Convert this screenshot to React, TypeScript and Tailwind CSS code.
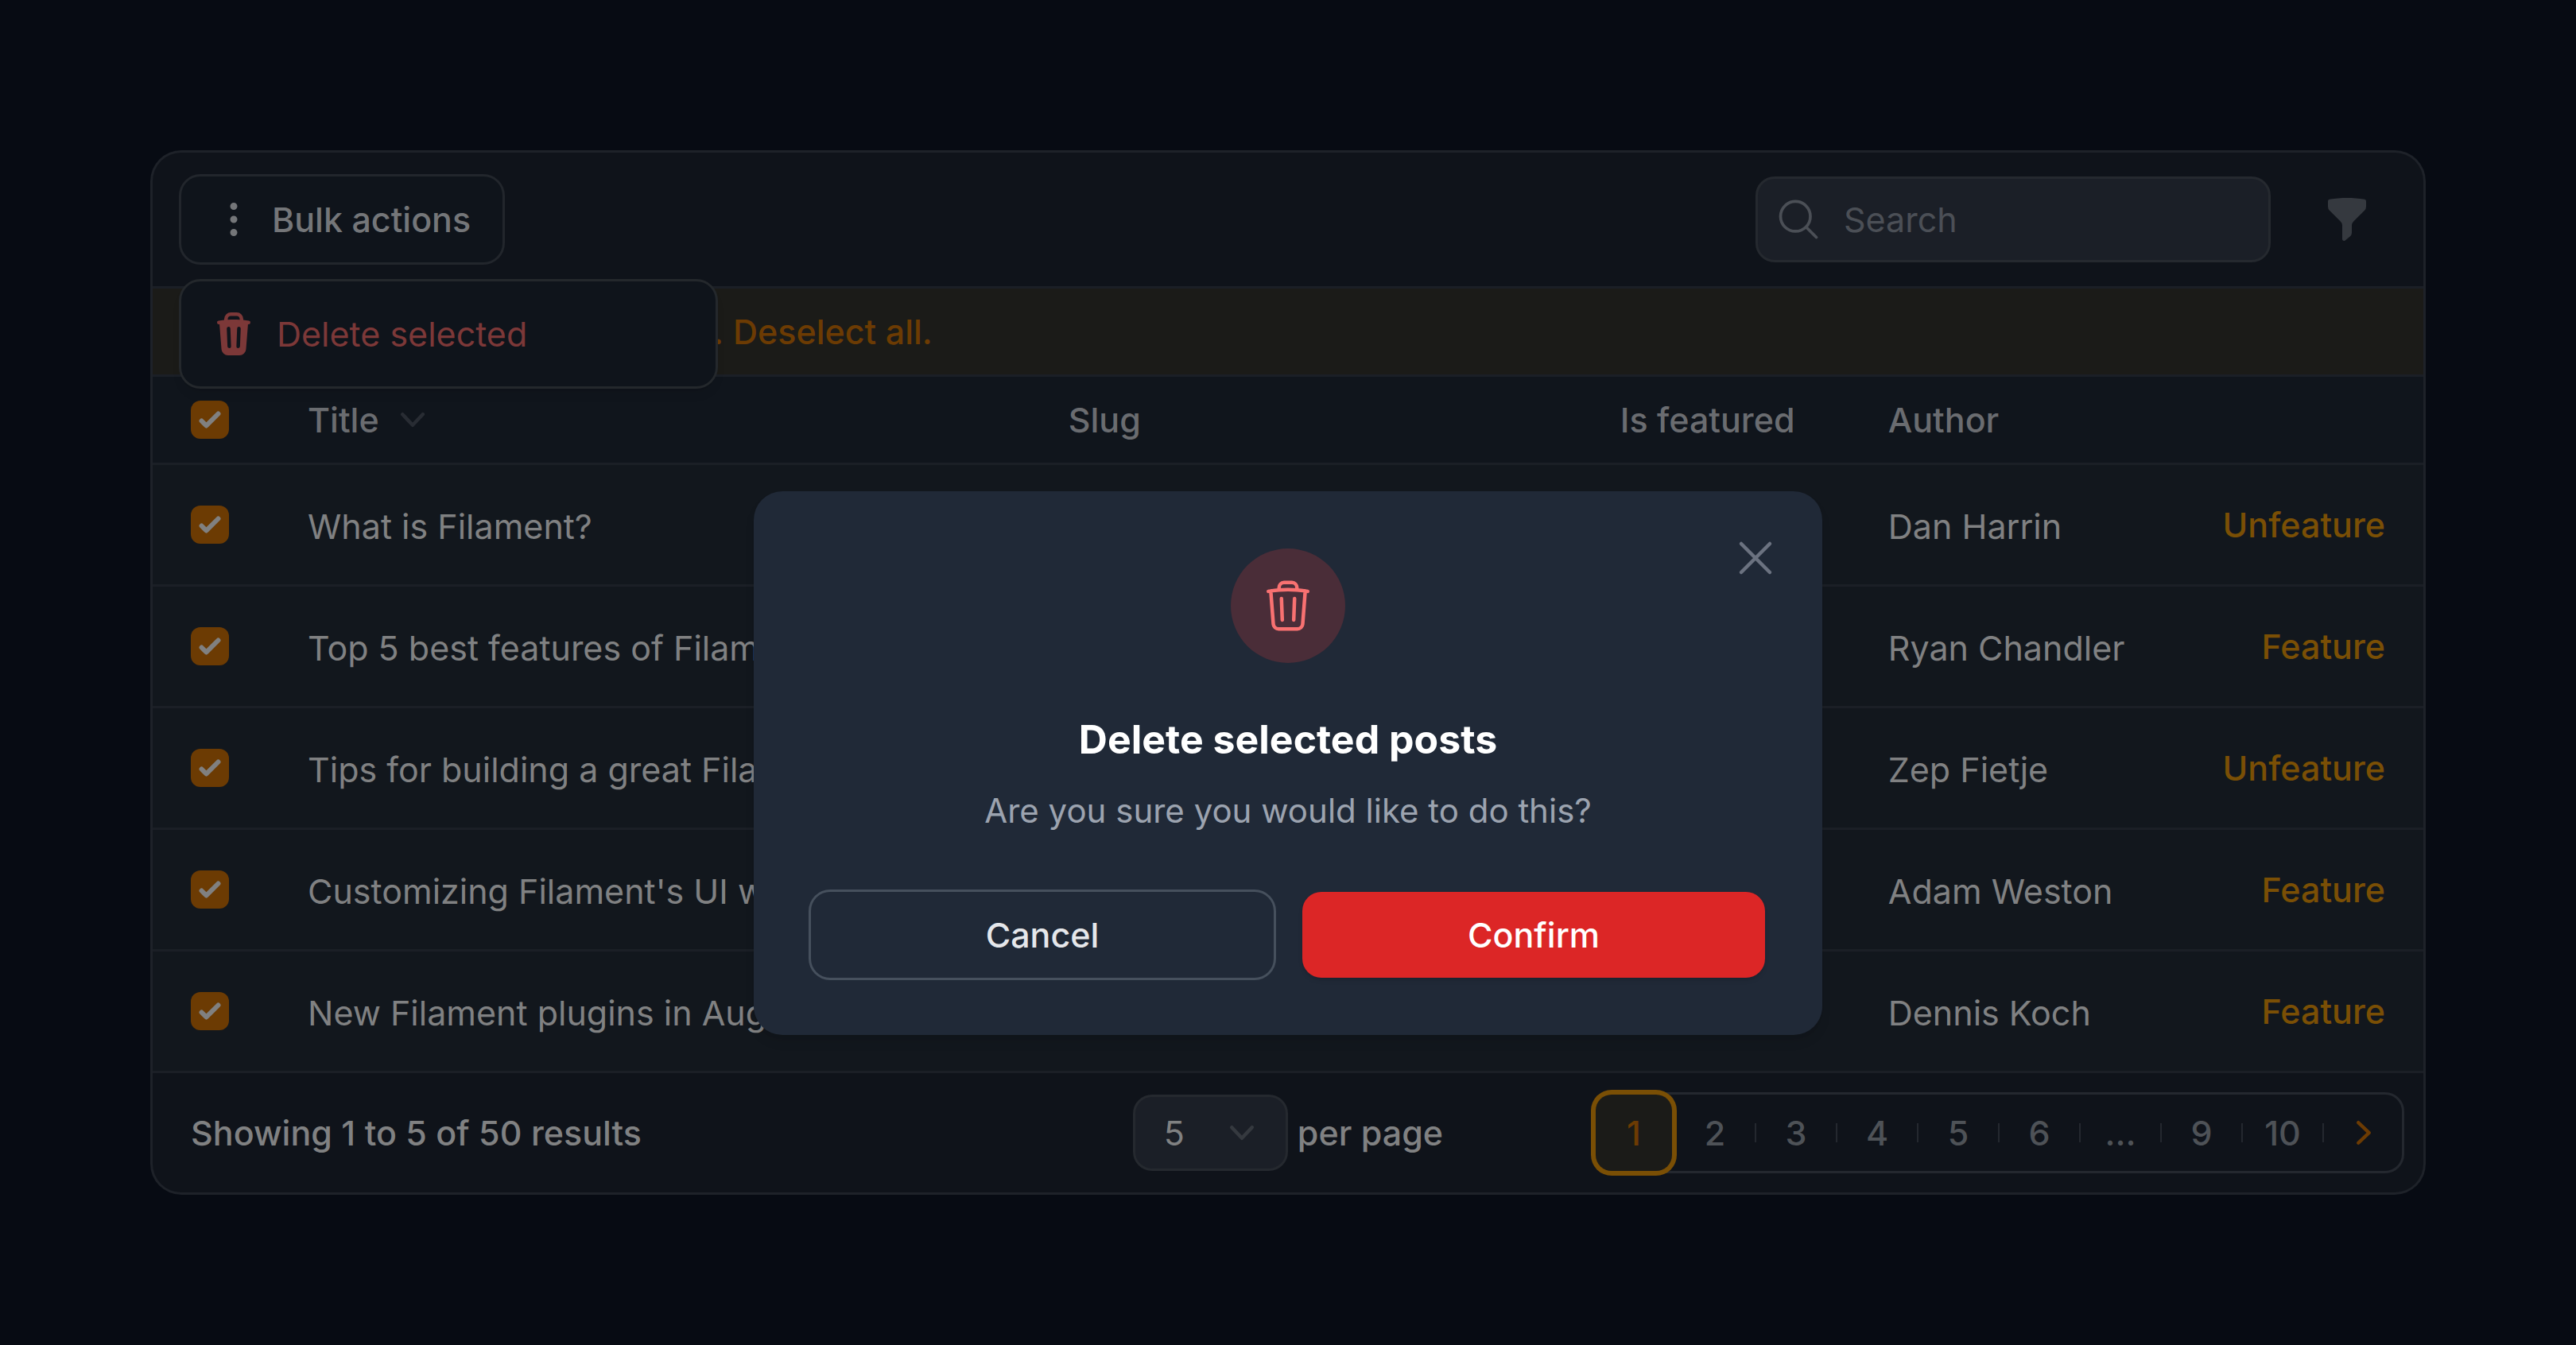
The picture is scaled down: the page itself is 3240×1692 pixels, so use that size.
import React from "react";

const posts = [
  { title: "What is Filament?", author: "Dan Harrin", action: "Unfeature" },
  { title: "Top 5 best features of Filament", author: "Ryan Chandler", action: "Feature" },
  { title: "Tips for building a great Filament plugin", author: "Zep Fietje", action: "Unfeature" },
  { title: "Customizing Filament's UI with themes", author: "Adam Weston", action: "Feature" },
  { title: "New Filament plugins in August", author: "Dennis Koch", action: "Feature" },
];

const pages = ["2", "3", "4", "5", "6", "...", "9", "10"];

function MiniIcon({ path, className }: { path: string; className: string }) {
  return (
    <svg viewBox="0 0 20 20" fill="currentColor" aria-hidden="true" className={className}>
      <path fillRule="evenodd" clipRule="evenodd" d={path} />
    </svg>
  );
}

function OutlineIcon({ path, className }: { path: string; className: string }) {
  return (
    <svg
      viewBox="0 0 24 24"
      fill="none"
      stroke="currentColor"
      strokeWidth="1.5"
      strokeLinecap="round"
      strokeLinejoin="round"
      aria-hidden="true"
      className={className}
    >
      <path d={path} />
    </svg>
  );
}

const icons = {
  ellipsis:
    "M10 3a1.5 1.5 0 110 3 1.5 1.5 0 010-3zM10 8.5a1.5 1.5 0 110 3 1.5 1.5 0 010-3zM11.5 15.5a1.5 1.5 0 10-3 0 1.5 1.5 0 003 0z",
  trashSolid:
    "M8.75 1A2.75 2.75 0 006 3.75v.443c-.795.077-1.584.176-2.365.298a.75.75 0 10.23 1.482l.149-.022.841 10.518A2.75 2.75 0 007.596 19h4.807a2.75 2.75 0 002.742-2.53l.841-10.52.149.023a.75.75 0 00.23-1.482A41.03 41.03 0 0014 4.193V3.75A2.75 2.75 0 0011.25 1h-2.5zM10 4c.84 0 1.673.025 2.5.075V3.75c0-.69-.56-1.25-1.25-1.25h-2.5c-.69 0-1.25.56-1.25 1.25v.325C8.327 4.025 9.16 4 10 4zM8.58 7.72a.75.75 0 00-1.5.06l.3 7.5a.75.75 0 101.5-.06l-.3-7.5zm4.34.06a.75.75 0 10-1.5-.06l-.3 7.5a.75.75 0 101.5.06l.3-7.5z",
  funnel:
    "M2.628 1.601C5.028 1.206 7.49 1 10 1s4.973.206 7.372.601a.75.75 0 01.628.74v2.288a2.25 2.25 0 01-.659 1.59l-4.682 4.683a2.25 2.25 0 00-.659 1.59v3.037c0 .684-.31 1.33-.844 1.757l-1.937 1.55A.75.75 0 018 18.25v-5.757a2.25 2.25 0 00-.659-1.591L2.659 6.22A2.25 2.25 0 012 4.629V2.34a.75.75 0 01.628-.74z",
  chevronDown:
    "M5.23 7.21a.75.75 0 011.06.02L10 11.168l3.71-3.938a.75.75 0 111.08 1.04l-4.25 4.5a.75.75 0 01-1.08 0l-4.25-4.5a.75.75 0 01.02-1.06z",
  chevronRight:
    "M7.21 14.77a.75.75 0 01.02-1.06L11.168 10 7.23 6.29a.75.75 0 111.04-1.08l4.5 4.25a.75.75 0 010 1.08l-4.5 4.25a.75.75 0 01-1.06-.02z",
  search: "m21 21-5.197-5.197m0 0A7.5 7.5 0 1 0 5.196 5.196a7.5 7.5 0 0 0 10.607 10.607Z",
  close: "M6 18 18 6M6 6l12 12",
  trash:
    "m14.74 9-.346 9m-4.788 0L9.26 9m9.968-3.21c.342.052.682.107 1.022.166m-1.022-.165L18.16 19.673a2.25 2.25 0 0 1-2.244 2.077H8.084a2.25 2.25 0 0 1-2.244-2.077L4.772 5.79m14.456 0a48.108 48.108 0 0 0-3.478-.397m-12 .562c.34-.059.68-.114 1.022-.165m0 0a48.11 48.11 0 0 1 3.478-.397m7.5 0v-.916c0-1.18-.91-2.164-2.09-2.201a51.964 51.964 0 0 0-3.32 0c-1.18.037-2.09 1.022-2.09 2.201v.916m7.5 0a48.667 48.667 0 0 0-7.5 0",
};

function Checkbox({ label }: { label: string }) {
  return (
    <div className="relative size-12">
      <input
        type="checkbox"
        defaultChecked
        aria-label={label}
        className="peer block size-12 appearance-none rounded-xl border-3 border-[#2a2e35] checked:border-0 checked:bg-[#6c3b03]"
      />
      <svg
        viewBox="0 0 16 16"
        fill="currentColor"
        aria-hidden="true"
        className="pointer-events-none absolute inset-0 hidden size-12 text-[#808080] peer-checked:block"
      >
        <path d="M12.207 4.793a1 1 0 010 1.414l-5 5a1 1 0 01-1.414 0l-2-2a1 1 0 011.414-1.414L6.5 9.086l4.293-4.293a1 1 0 011.414 0z" />
      </svg>
    </div>
  );
}

function Toolbar() {
  return (
    <div className="flex items-center justify-between border-b-3 border-[#1b1f26] py-[30px] pr-[66px] pl-9">
      <div className="relative">
        <button
          type="button"
          aria-expanded="true"
          className="flex h-27 items-center gap-[18px] rounded-3xl bg-[#0f141b] pr-10 pl-9 font-medium text-[#747679] ring-3 ring-[#22262c]"
        >
          <MiniIcon path={icons.ellipsis} className="size-15" />
          Bulk actions
        </button>
        <div
          role="menu"
          className="absolute top-full left-0 z-10 mt-6 w-[672px] rounded-3xl bg-[#0f141b] p-3 shadow-lg ring-3 ring-[#24282c]"
        >
          <button
            type="button"
            role="menuitem"
            className="flex h-27 w-full items-center gap-6 rounded-xl px-6 text-[#7c3838]"
          >
            <MiniIcon path={icons.trashSolid} className="size-15" />
            Delete selected
          </button>
        </div>
      </div>
      <div className="flex items-center gap-[66px]">
        <div className="relative">
          <OutlineIcon
            path={icons.search}
            className="pointer-events-none absolute inset-y-0 left-6 my-auto size-15 text-[#4b4f56]"
          />
          <input
            type="search"
            aria-label="Search"
            placeholder="Search"
            className="block h-27 w-[648px] rounded-3xl border-3 border-[#25292f] bg-[#1b1f27] pr-6 pl-27 placeholder:text-[#4b4f56]"
          />
        </div>
        <button type="button" aria-label="Filter" className="text-[#35393f]">
          <MiniIcon path={icons.funnel} className="size-15" />
        </button>
      </div>
    </div>
  );
}

function PostsTable() {
  return (
    <table className="w-full table-fixed border-separate border-spacing-0 text-left">
      <colgroup>
        <col className="w-[147px]" />
        <col className="w-[33.5%]" />
        <col className="w-[24.3%]" />
        <col className="w-[11.8%]" />
        <col />
        <col className="w-[12%]" />
      </colgroup>
      <thead className="bg-[#10151c] text-[#6a6c70]">
        <tr>
          <th scope="col" className="h-[111px] border-b-3 border-[#1b1f26] pl-12">
            <Checkbox label="Select all posts" />
          </th>
          <th scope="col" className="border-b-3 border-[#1b1f26] px-12 font-medium">
            <button type="button" className="flex items-center gap-3">
              Title
              <MiniIcon path={icons.chevronDown} className="size-15 text-[#282c33]" />
            </button>
          </th>
          <th scope="col" className="border-b-3 border-[#1b1f26] px-12 font-medium">Slug</th>
          <th scope="col" className="border-b-3 border-[#1b1f26] px-12 font-medium whitespace-nowrap">Is featured</th>
          <th scope="col" className="border-b-3 border-[#1b1f26] px-12 font-medium">Author</th>
          <th scope="col" aria-label="Actions" className="border-b-3 border-[#1b1f26] px-12" />
        </tr>
      </thead>
      <tbody className="bg-[#12171d] text-[#808182]">
        {posts.map((post) => (
          <tr key={post.title}>
            <td className="h-[153px] border-b-3 border-[#1b1f26] pl-12">
              <Checkbox label={`Select ${post.title}`} />
            </td>
            <td className="border-b-3 border-[#1b1f26] px-12 pt-1 whitespace-nowrap">{post.title}</td>
            <td className="border-b-3 border-[#1b1f26] px-12" />
            <td className="border-b-3 border-[#1b1f26] px-12" />
            <td className="border-b-3 border-[#1b1f26] px-12 pt-1 whitespace-nowrap">{post.author}</td>
            <td className="border-b-3 border-[#1b1f26] px-12 text-right">
              <button type="button" className="font-medium text-[#7a4f05]">
                {post.action}
              </button>
            </td>
          </tr>
        ))}
      </tbody>
    </table>
  );
}

function Footer() {
  return (
    <div className="grid h-[150px] grid-cols-[1fr_auto_1fr] items-center px-6 font-medium text-[#808182]">
      <p className="pl-6">Showing 1 to 5 of 50 results</p>
      <div className="flex items-center gap-3">
        <div className="relative">
          <select
            id="per-page"
            defaultValue="5"
            className="block h-24 w-[195px] appearance-none rounded-3xl border-3 border-[#25292f] bg-[#1b1f27] pl-9 font-normal"
          >
            <option>5</option>
            <option>10</option>
            <option>25</option>
            <option>50</option>
          </select>
          <MiniIcon
            path={icons.chevronDown}
            className="pointer-events-none absolute inset-y-0 right-7 my-auto size-15 text-[#35393f]"
          />
        </div>
        <label htmlFor="per-page">per page</label>
      </div>
      <nav
        aria-label="Pagination"
        className="flex items-center justify-self-end rounded-3xl border-3 border-[#24282f] text-[#4e5257]"
      >
        <button
          type="button"
          aria-current="page"
          className="size-24 rounded-[20px] bg-[#1b1b18] text-[#6c3b03] ring-6 ring-[#7a4f05]"
        >
          1
        </button>
        <span className="w-1.5" />
        {pages.map((page) => (
          <React.Fragment key={page}>
            <button type="button" className="size-24">
              {page}
            </button>
            <span className="mx-0.5 h-6 w-0.5 bg-[#24282f]" />
          </React.Fragment>
        ))}
        <button type="button" aria-label="Next page" className="flex size-24 items-center justify-center text-[#6c3b03]">
          <MiniIcon path={icons.chevronRight} className="size-15" />
        </button>
      </nav>
    </div>
  );
}

function DeleteDialog() {
  return (
    <div className="absolute inset-0 z-20 flex items-center justify-center pt-[228px]">
      <div
        role="dialog"
        aria-modal="true"
        aria-labelledby="dialog-title"
        className="relative w-full max-w-[1344px] rounded-[36px] bg-[#202937] p-18 text-center shadow-lg"
      >
        <button type="button" aria-label="Close" className="absolute top-12 right-12 text-[#6b7280]">
          <OutlineIcon path={icons.close} className="size-18" />
        </button>
        <div className="mx-auto flex size-36 items-center justify-center rounded-full bg-[#4a2d38] text-[#f87171]">
          <OutlineIcon path={icons.trash} className="size-18" />
        </div>
        <h2 id="dialog-title" className="mt-15 text-[50px] leading-[72px] font-bold text-white">
          Delete selected posts
        </h2>
        <p className="mt-6 text-[42px] leading-[60px] text-[#9ca3af]">Are you sure you would like to do this?</p>
        <div className="mt-18 grid grid-cols-2 gap-9 font-medium">
          <button type="button" className="h-27 rounded-3xl text-[#e5e7eb] ring-3 ring-[#46505d]">
            Cancel
          </button>
          <button type="button" className="h-27 rounded-3xl bg-[#dc2626] text-white shadow-md">
            Confirm
          </button>
        </div>
      </div>
    </div>
  );
}

export default function App() {
  return (
    <div className="relative min-h-screen bg-[#070b13] p-48 font-['Inter',sans-serif] text-[43px] leading-[60px]">
      <main className="rounded-[36px] bg-[#0f131a] ring-3 ring-[#1e2229]">
        <Toolbar />
        <div className="flex h-[111px] items-center gap-3 border-b-3 border-[#1b1f26] bg-[#1b1b18] pl-12 font-medium whitespace-nowrap text-[#6c3b03]">
          <span className="flex w-[670px] justify-end">5 records selected. Select all 50.</span>
          <button type="button">Deselect all.</button>
        </div>
        <PostsTable />
        <Footer />
      </main>
      <DeleteDialog />
    </div>
  );
}
